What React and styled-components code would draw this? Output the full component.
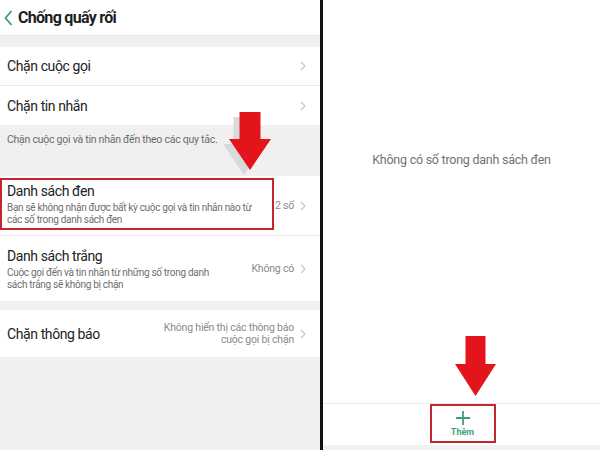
import styled, { createGlobalStyle } from "styled-components";

const GlobalStyle = createGlobalStyle`
  html, body {
    margin: 0;
    padding: 0;
    background: #ffffff;
  }
  body {
    font-family: Roboto, "Noto Sans", "Liberation Sans", sans-serif;
  }
`;

const GREEN = "#3f9f7d";
const RED = "#e3141c";
const BOX_RED = "#c4262e";

const Screen = styled.div`
  position: relative;
  display: flex;
  width: 600px;
  height: 450px;
  overflow: hidden;
`;

const LeftPanel = styled.div`
  display: flex;
  flex-direction: column;
  width: 320px;
  flex-shrink: 0;
  background: #f0f0f0;
  border-right: 3px solid #111;
`;

const Header = styled.div`
  display: flex;
  align-items: center;
  gap: 5px;
  height: 35px;
  padding-left: 4px;
  background: #ffffff;
  border-bottom: 1px solid #e6e6e6;
`;

const HeaderTitle = styled.h1`
  margin: 0;
  font-size: 16px;
  font-weight: 700;
  color: #1e1e1e;
  letter-spacing: -0.7px;
`;

const Band = styled.div`
  height: ${(p) => p.h}px;
  flex-shrink: 0;
`;

const Group = styled.div`
  background: #ffffff;
  display: flex;
  flex-direction: column;
`;

const Row = styled.div`
  display: flex;
  align-items: center;
  height: ${(p) => p.h}px;
  padding: 0 14px 0 7px;
  border-top: ${(p) => (p.divider ? "1px solid #ececec" : "none")};
`;

const TextBlock = styled.div`
  flex: 1;
  display: flex;
  flex-direction: column;
  justify-content: center;
  gap: 2px;
  min-width: 0;
  ${(p) =>
    p.highlighted &&
    `
    flex: none;
    align-self: flex-start;
    width: 263px;
    height: 48px;
    margin: 2px 0 0 -7px;
    padding: 0 2px 0 5px;
    border: 2px solid ${BOX_RED};
  `}
`;

const Title = styled.div`
  font-size: 14px;
  color: #222;
  line-height: 18px;
  letter-spacing: -0.4px;
  white-space: nowrap;
`;

const Sub = styled.div`
  font-size: 10px;
  line-height: 12px;
  letter-spacing: -0.3px;
  color: #6e6e6e;
  white-space: nowrap;
`;

const Value = styled.div`
  display: flex;
  align-items: center;
  gap: 6px;
  margin-left: auto;
  font-size: 10.5px;
  line-height: 12px;
  letter-spacing: -0.2px;
  color: #8a8a8a;
  text-align: right;
  flex-shrink: 0;
`;

const Caption = styled.div`
  padding: 8px 7px 0;
  height: 43px;
  font-size: 10.5px;
  letter-spacing: -0.25px;
  color: #6a6a6a;
  flex-shrink: 0;
`;

const RightPanel = styled.div`
  flex: 1;
  display: flex;
  flex-direction: column;
  background: #ffffff;
`;

const Empty = styled.div`
  flex: 1;
  padding-top: 152px;
  text-align: center;
  font-size: 12.5px;
  letter-spacing: -0.25px;
  color: #727272;
`;

const BottomBar = styled.div`
  height: 41px;
  border-top: 1px solid #e8e8e8;
  border-bottom: 5px solid #f2f2f2;
  display: flex;
  justify-content: center;
`;

const AddButton = styled.button`
  display: flex;
  flex-direction: column;
  align-items: center;
  justify-content: center;
  gap: 1px;
  width: 66px;
  height: 39px;
  margin-left: 2px;
  padding: 0;
  background: transparent;
  border: 2px solid ${BOX_RED};
  color: ${GREEN};
  font-family: inherit;
  font-size: 9px;
  font-weight: 700;
`;

const ArrowWrap = styled.div`
  position: absolute;
  left: ${(p) => p.x}px;
  top: ${(p) => p.y}px;
  pointer-events: none;
`;

const Chevron = () => (
  <svg width="6" height="10" viewBox="0 0 6 10">
    <path d="M1 1 L5 5 L1 9" fill="none" stroke="#c6c6c6" strokeWidth="1.1" />
  </svg>
);

const BackIcon = () => (
  <svg width="9" height="16" viewBox="0 0 9 16">
    <path d="M7.5 1 L1.5 8 L7.5 15" fill="none" stroke={GREEN} strokeWidth="1.8" />
  </svg>
);

const PlusIcon = () => (
  <svg width="16" height="16" viewBox="0 0 16 16">
    <path d="M8 1 V15 M1 8 H15" stroke={GREEN} strokeWidth="1.8" />
  </svg>
);

const DownArrow = ({ x, y, w, h, shaft, shadow }) => {
  const neck = Math.round(h * 0.46);
  const sl = (w - shaft) / 2;
  const pts = `${sl},0 ${sl + shaft},0 ${sl + shaft},${neck} ${w},${neck} ${w / 2},${h} 0,${neck} ${sl},${neck}`;
  return (
    <ArrowWrap x={x - 8} y={y}>
      <svg width={w + 8} height={h + 6} viewBox={`-8 0 ${w + 8} ${h + 6}`}>
        {shadow && <polygon points={pts} fill="#dadada" transform="translate(-6 5)" />}
        <polygon points={pts} fill={RED} />
      </svg>
    </ArrowWrap>
  );
};

export default function App() {
  return (
    <Screen>
      <GlobalStyle />
      <LeftPanel>
        <Header>
          <BackIcon />
          <HeaderTitle>Chống quấy rối</HeaderTitle>
        </Header>
        <Band h={11} />
        <Group>
          <Row h={38}>
            <TextBlock>
              <Title>Chặn cuộc gọi</Title>
            </TextBlock>
            <Value>
              <Chevron />
            </Value>
          </Row>
          <Row h={39} divider>
            <TextBlock>
              <Title>Chặn tin nhắn</Title>
            </TextBlock>
            <Value>
              <Chevron />
            </Value>
          </Row>
        </Group>
        <Caption>Chặn cuộc gọi và tin nhắn đến theo các quy tắc.</Caption>
        <Group>
          <Row h={59}>
            <TextBlock highlighted>
              <Title>Danh sách đen</Title>
              <Sub>
                Bạn sẽ không nhận được bất kỳ cuộc gọi và tin nhắn nào từ
                <br />
                các số trong danh sách đen
              </Sub>
            </TextBlock>
            <Value>
              2 số
              <Chevron />
            </Value>
          </Row>
          <Row h={65} divider>
            <TextBlock>
              <Title>Danh sách trắng</Title>
              <Sub>
                Cuộc gọi đến và tin nhắn từ những số trong danh
                <br />
                sách trắng sẽ không bị chặn
              </Sub>
            </TextBlock>
            <Value>
              Không có
              <Chevron />
            </Value>
          </Row>
        </Group>
        <Band h={9} />
        <Group>
          <Row h={47}>
            <TextBlock>
              <Title>Chặn thông báo</Title>
            </TextBlock>
            <Value>
              <span>
                Không hiển thị các thông báo
                <br />
                cuộc gọi bị chặn
              </span>
              <Chevron />
            </Value>
          </Row>
        </Group>
      </LeftPanel>
      <RightPanel>
        <Empty>Không có số trong danh sách đen</Empty>
        <BottomBar>
          <AddButton>
            <PlusIcon />
            Thêm
          </AddButton>
        </BottomBar>
      </RightPanel>
      <DownArrow x={229} y={112} w={42} h={58} shaft={21} shadow />
      <DownArrow x={455} y={336} w={41} h={60} shaft={20} />
    </Screen>
  );
}
